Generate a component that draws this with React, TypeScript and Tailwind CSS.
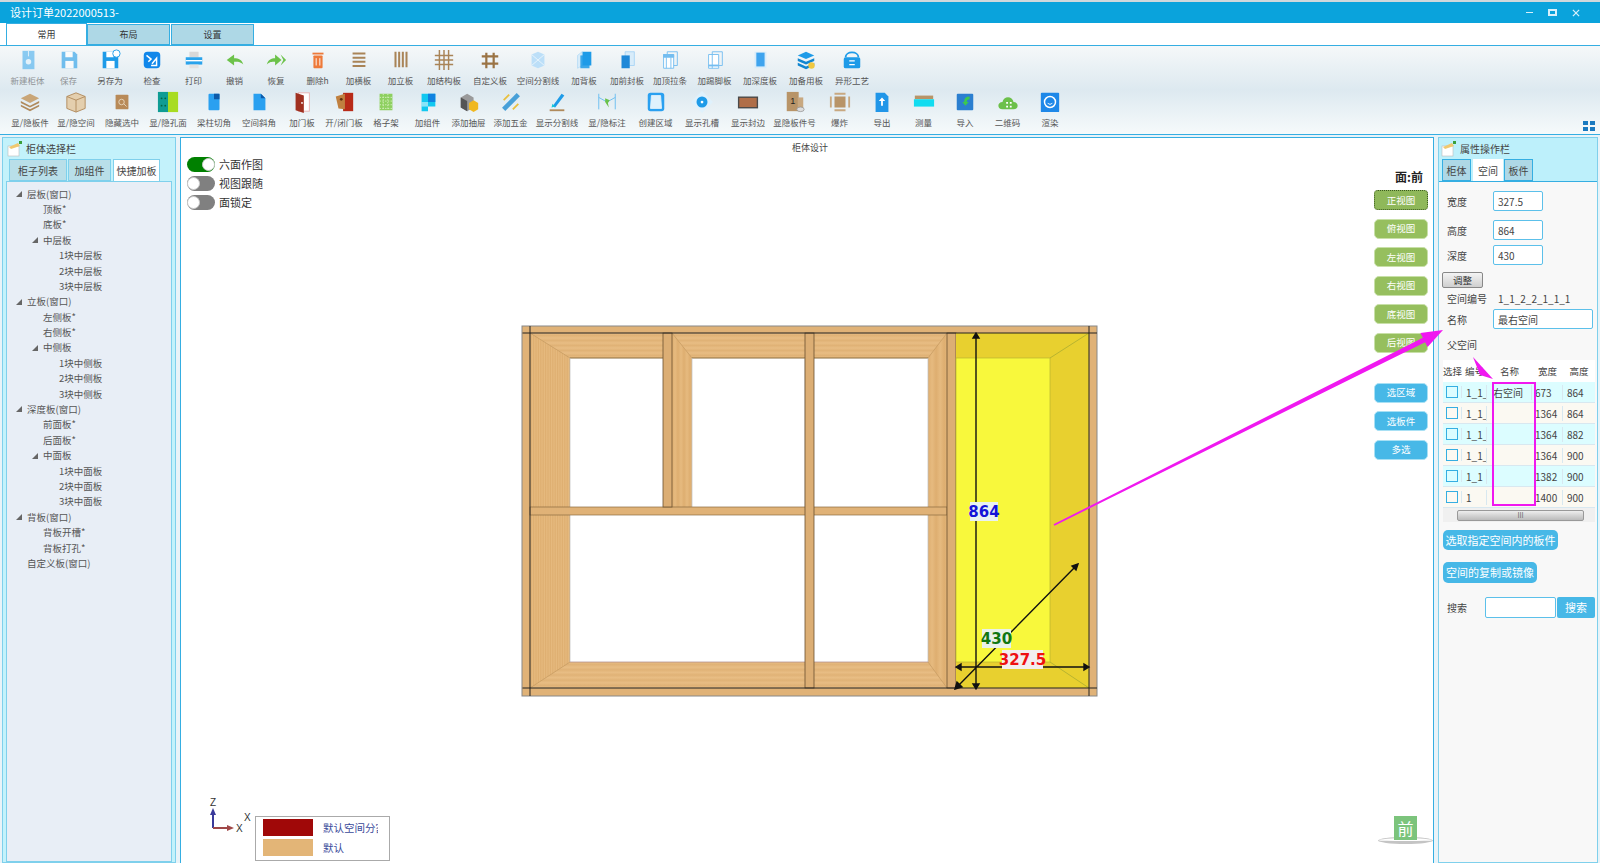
import React from "react";

const cjk = "font-['Noto_Sans_CJK_SC','Noto_Sans',sans-serif]";

type ToolItem = { label: string; w: string; icon: React.ReactNode; faded?: boolean };

const Svg = ({ children }: { children: React.ReactNode }) => (
  <svg width="22" height="22" viewBox="0 0 24 24" className="shrink-0">
    {children}
  </svg>
);

const floppy = (
  <>
    <path d="M4 3h14l3 3v15H4z" fill="#1e9be8" />
    <rect x="8" y="3" width="8" height="6" fill="#fff" />
    <rect x="8" y="13" width="9" height="8" fill="#fff" />
  </>
);

const cube = (front: string, back: string) => (
  <>
    <path d="M10 3h10v15H10z" fill={back} />
    <path d="M5 7l5-4v15l-5 3z" fill="#d8ecfa" stroke="#a8d4f5" strokeWidth="0.7" />
    <path d="M8 7h10v14H8z" fill={front} opacity="0.85" />
  </>
);

const row1: ToolItem[] = [
  { label: "新建柜体", w: "w-[41px]", faded: true, icon: <Svg><rect x="6" y="2" width="13" height="20" fill="#46aeee" /><circle cx="12.5" cy="14" r="3" fill="#dff1fc" /><path d="M12.5 2v6" stroke="#dff1fc" /></Svg> },
  { label: "保存", w: "w-[41px]", faded: true, icon: <Svg>{floppy}</Svg> },
  { label: "另存为", w: "w-[42px]", icon: <Svg>{floppy}<circle cx="19" cy="5" r="4" fill="#fff" stroke="#1e9be8" /></Svg> },
  { label: "检查", w: "w-[42px]", icon: <Svg><rect x="3" y="3" width="18" height="18" rx="4" fill="#1187ea" /><path d="M6 7l5 4-3 3M12 16l5-6v8h-6" stroke="#fff" strokeWidth="1.6" fill="none" /></Svg> },
  { label: "打印", w: "w-[41px]", icon: <Svg><rect x="7" y="3" width="10" height="6" fill="#d8d8d8" /><rect x="3" y="9" width="18" height="8" fill="#2aa3ec" /><rect x="3" y="12" width="18" height="1.5" fill="#fff" /><rect x="7" y="17" width="10" height="4" fill="#e2e2e2" /></Svg> },
  { label: "撤销", w: "w-[41px]", icon: <Svg><path d="M3 12l8-6v4c5 0 9 2 10 7-3-3-6-3-10-3v4z" fill="#6cc24a" /></Svg> },
  { label: "恢复", w: "w-[42px]", icon: <Svg><path d="M2 17c1-5 5-7 9-7V6l7 6-7 6v-4c-4 0-6 0-9 3z" fill="#6cc24a" /><path d="M17 6l6 6-6 6 3-6z" fill="#6cc24a" /></Svg> },
  { label: "删除h", w: "w-[41px]", icon: <Svg><rect x="7" y="7" width="10" height="14" rx="1" fill="#ee7a3a" /><rect x="6" y="4" width="12" height="2" fill="#ee7a3a" /><path d="M10 10v8M14 10v8" stroke="#fff" /></Svg> },
  { label: "加横板", w: "w-[41px]", icon: <Svg><path d="M5 5h14M5 9.500h14M5 14h14M5 18.500h14" stroke="#a98457" strokeWidth="2.2" /></Svg> },
  { label: "加立板", w: "w-[43px]", icon: <Svg><path d="M6 3v17M10 3v17M14 3v17M18 3v17" stroke="#a98457" strokeWidth="2.2" /></Svg> },
  { label: "加结构板", w: "w-[44px]", icon: <Svg><path d="M7 1v22M12 1v22M17 1v22M2 7h20M2 12h20M2 17h20" stroke="#a98457" strokeWidth="1.6" /></Svg> },
  { label: "自定义板", w: "w-[48px]", icon: <Svg><path d="M8 4v17M16 4v17M3 8h18M3 16h18" stroke="#9a7344" strokeWidth="2.4" /></Svg> },
  { label: "空间分割线", w: "w-[48px]", icon: <Svg><path d="M5 6l7-3 7 3v12l-7 3-7-3z" fill="#bcdff8" /><path d="M5 6l14 12M19 6L5 18" stroke="#e8f4fc" /></Svg> },
  { label: "加背板", w: "w-[44px]", icon: <Svg>{cube("#1e9be8", "#1e9be8")}</Svg> },
  { label: "加前封板", w: "w-[42px]", icon: <Svg><path d="M10 3h10v15H10z" fill="#d8ecfa" stroke="#a8d4f5" /><path d="M6 7h9v14H6z" fill="#1e88d8" /></Svg> },
  { label: "加顶拉条", w: "w-[44px]", icon: <Svg><path d="M9 3h11v15H9z" fill="none" stroke="#74bdf0" /><path d="M5 6h11v15H5z" fill="#fff" stroke="#74bdf0" /><path d="M5 6h11v3H5zM8 9v12M13 9v12" stroke="#74bdf0" fill="#74bdf0" /></Svg> },
  { label: "加踢脚板", w: "w-[45px]", icon: <Svg><path d="M9 3h11v15H9z" fill="none" stroke="#74bdf0" /><path d="M5 6h11v15H5z" fill="#fff" stroke="#74bdf0" /><path d="M9 6v15" stroke="#74bdf0" /><rect x="5" y="17" width="11" height="2" fill="#74bdf0" /></Svg> },
  { label: "加深度板", w: "w-[46px]", icon: <Svg><path d="M6 3h13v18H6z" fill="#d8ecfa" /><rect x="8" y="4" width="9" height="15" fill="#3fa4ee" /></Svg> },
  { label: "加备用板", w: "w-[46px]", icon: <Svg><path d="M12 3l9 4-9 4-9-4z" fill="#1e9be8" /><path d="M3 10l9 4 9-4v3l-9 4-9-4zM3 15l9 4 9-4v3l-9 4-9-4z" fill="#1186d0" /><circle cx="18" cy="18" r="3.500" fill="#f0c840" /></Svg> },
  { label: "异形工艺", w: "w-[46px]", icon: <Svg><path d="M5 9c0-7 14-7 14 0" fill="none" stroke="#1e9be8" strokeWidth="2" /><rect x="3" y="9" width="18" height="12" rx="2" fill="#1e9be8" /><path d="M9 13h6M15 17H9" stroke="#fff" strokeWidth="1.400" /></Svg> },
];

const row2: ToolItem[] = [
  { label: "显/隐板件", w: "w-[46px]", icon: <Svg><path d="M12 3l10 5-10 5L2 8z" fill="#c9a678" /><path d="M2 11l10 5 10-5v2l-10 5-10-5zM2 15l10 5 10-5v2l-10 5-10-5z" fill="#b08a5c" /></Svg> },
  { label: "显/隐空间", w: "w-[46px]", icon: <Svg><path d="M12 2l10 4v13l-10 4-10-4V6z" fill="#e4cfae" stroke="#b08a5c" /><path d="M2 6l10 4 10-4M12 10v13" stroke="#b08a5c" fill="none" /></Svg> },
  { label: "隐藏选中", w: "w-[46px]", icon: <Svg><rect x="5" y="4" width="14" height="16" rx="1" fill="#b88a58" /><circle cx="11.500" cy="12" r="3" fill="none" stroke="#e8d6bc" /><path d="M14 14l3 3" stroke="#e8d6bc" /></Svg> },
  { label: "显/隐孔面", w: "w-[46px]", icon: <Svg><rect x="1" y="1" width="11" height="22" fill="#0f9c94" /><rect x="12" y="1" width="11" height="22" fill="#a8dc22" /><circle cx="5" cy="8" r="1" fill="#064" /><circle cx="9" cy="8" r="1" fill="#064" /><circle cx="5" cy="16" r="1" fill="#064" /><circle cx="9" cy="16" r="1" fill="#064" /></Svg> },
  { label: "梁柱切角", w: "w-[46px]", icon: <Svg><rect x="6" y="3" width="12" height="18" rx="1" fill="#2aa0f0" /><rect x="12" y="3" width="6" height="6" fill="#0e5aa8" /></Svg> },
  { label: "空间斜角", w: "w-[44px]", icon: <Svg><path d="M6 3h8l5 5v13H6z" fill="#2aa0f0" /><path d="M14 3l5 5h-5z" fill="#0e5aa8" /></Svg> },
  { label: "加门板", w: "w-[42px]", icon: <Svg><rect x="8" y="2" width="12" height="20" fill="#fff" stroke="#e8b0b0" /><path d="M5 2l9 3v19l-9-3z" fill="#a03020" /><circle cx="12" cy="13" r="1" fill="#fff" /></Svg> },
  { label: "开/闭门板", w: "w-[42px]", icon: <Svg><rect x="11" y="2" width="11" height="20" fill="#b82a18" /><path d="M3 6l10-3v17l-7-1z" fill="#c08040" /><circle cx="9" cy="9" r="1.500" fill="#5a3010" /></Svg> },
  { label: "格子架", w: "w-[42px]", icon: <Svg><rect x="5" y="3" width="14" height="18" fill="#8ed060" /><path d="M5 7h14M5 11h14M5 15h14M5 19h14M9 3v18M14 3v18" stroke="#d6f0c0" strokeDasharray="1.500 1.500" /></Svg> },
  { label: "加组件", w: "w-[41px]", icon: <Svg><path d="M5 3h15v14H12v5H5z" fill="#12c8f0" /><path d="M12 3h8v9h-8z" fill="#1182e0" /><path d="M5 12h7v5H5z" fill="#fff" opacity="0.5" /></Svg> },
  { label: "添加抽屉", w: "w-[41px]", icon: <Svg><path d="M3 7l7-4 7 4v11l-7 4-7-4z" fill="#9a9a9a" /><path d="M3 7l7 4v11l-7-4z" fill="#555" /><path d="M12 13l5-3 5 3v7l-5 3-5-3z" fill="#f0b820" /></Svg> },
  { label: "添加五金", w: "w-[43px]", icon: <Svg><path d="M4 20L20 4" stroke="#48a0d8" strokeWidth="5" /><path d="M4 10l6-6M14 20l6-6" stroke="#e8c040" strokeWidth="2" /></Svg> },
  { label: "显示分割线", w: "w-[50px]", icon: <Svg><path d="M7 17L17 3l3 2-10 13z" fill="#1e9be8" /><path d="M6 18l1-4 3 3z" fill="#16c8d8" /><rect x="4" y="20" width="16" height="2" fill="#b08a5c" /></Svg> },
  { label: "显/隐标注", w: "w-[50px]", icon: <Svg><path d="M3 3v17M21 3v17" stroke="#68bcf0" /><path d="M3 7l9 5 9-5" stroke="#68bcf0" fill="none" /><path d="M10 8l5 2-2 3 1 5-4-6z" fill="#6cc24a" /></Svg> },
  { label: "创建区域", w: "w-[47px]", icon: <Svg><rect x="3" y="2" width="18" height="20" rx="3" fill="#2aa0f0" /><path d="M7 5h10l1 14H6z" fill="#dff1fc" stroke="#dff1fc" /></Svg> },
  { label: "显示孔槽", w: "w-[46px]", icon: <Svg><path d="M0 12L12 0l12 12-12 12z" fill="#dff1fc" /><circle cx="12" cy="12" r="6" fill="#1e9be8" /><circle cx="12" cy="12" r="1.500" fill="#fff" /></Svg> },
  { label: "显示封边", w: "w-[46px]", icon: <Svg><rect x="1" y="6" width="22" height="13" fill="#4a4a4a" /><rect x="2.500" y="7.500" width="19" height="10" fill="#b06e48" /></Svg> },
  { label: "显隐板件号", w: "w-[47px]", icon: <Svg><rect x="3" y="1" width="13" height="21" fill="#b89468" /><rect x="15" y="7" width="6" height="13" fill="#c8a880" /><text x="9.500" y="14" fontSize="10" textAnchor="middle" fill="#222" fontFamily="Liberation Sans">1</text><ellipse cx="18" cy="20" rx="4" ry="2.500" fill="#ddd" stroke="#888" strokeWidth="0.7" /></Svg> },
  { label: "爆炸", w: "w-[43px]", icon: <Svg><rect x="6" y="6" width="12" height="12" fill="#b89468" /><path d="M6 2h12v2H6zM6 20h12v2H6zM1 6h2v12H1zM21 6h2v12h-2z" fill="#c8a880" /></Svg> },
  { label: "导出", w: "w-[42px]", icon: <Svg><path d="M5 2h10l4 4v17H5z" fill="#2196e8" /><path d="M12 7l3.500 4H13v5h-2v-5H8.500z" fill="#fff" /></Svg> },
  { label: "测量", w: "w-[41px]", icon: <Svg><rect x="2" y="5" width="20" height="4" fill="#b89468" /><rect x="1" y="9" width="22" height="8" fill="#12dcf0" /></Svg> },
  { label: "导入", w: "w-[42px]", icon: <Svg><rect x="3" y="3" width="18" height="18" rx="1" fill="#2b7fd0" /><path d="M17 6c-4 0-6 2-6 6h-2l3.500 4 3.500-4h-2c0-2 1-3 3-3z" fill="#3cc850" /></Svg> },
  { label: "二维码", w: "w-[43px]", icon: <Svg><path d="M6 20c-6 0-6-8 0-8 1-7 11-7 12 0 6 0 6 8 0 8z" fill="#6cc04a" /><path d="M10 12h2v2h-2zM14 12h2v2h-2zM10 16h2v2h-2zM14 16h2v2h-2z" fill="#fff" /></Svg> },
  { label: "渲染", w: "w-[42px]", icon: <Svg><rect x="2" y="2" width="20" height="21" rx="1" fill="#1e88e8" /><circle cx="12" cy="12" r="6" fill="none" stroke="#fff" strokeWidth="1.600" /><path d="M9.500 13c1 2 4 2 5 0" stroke="#fff" fill="none" /></Svg> },
];

const tree: [number, boolean, string][] = [
  [0, true, "层板(窗口)"],
  [1, false, "顶板*"],
  [1, false, "底板*"],
  [1, true, "中层板"],
  [2, false, "1块中层板"],
  [2, false, "2块中层板"],
  [2, false, "3块中层板"],
  [0, true, "立板(窗口)"],
  [1, false, "左侧板*"],
  [1, false, "右侧板*"],
  [1, true, "中侧板"],
  [2, false, "1块中侧板"],
  [2, false, "2块中侧板"],
  [2, false, "3块中侧板"],
  [0, true, "深度板(窗口)"],
  [1, false, "前面板*"],
  [1, false, "后面板*"],
  [1, true, "中面板"],
  [2, false, "1块中面板"],
  [2, false, "2块中面板"],
  [2, false, "3块中面板"],
  [0, true, "背板(窗口)"],
  [1, false, "背板开槽*"],
  [1, false, "背板打孔*"],
  [0, false, "自定义板(窗口)"],
];

const spaceRows = [
  ["1_1_", "右空间", "673", "864"],
  ["1_1_", "", "1364", "864"],
  ["1_1_", "", "1364", "882"],
  ["1_1_", "", "1364", "900"],
  ["1_1", "", "1382", "900"],
  ["1", "", "1400", "900"],
];

const viewBtns = ["俯视图", "左视图", "右视图", "底视图", "后视图"];

function PanelIcon() {
  return (
    <svg width="16" height="16" viewBox="0 0 16 16" className="shrink-0">
      <rect x="1" y="5" width="11" height="10" fill="#fff" stroke="#bbb" strokeWidth="0.6" />
      <path d="M2 6l9-4 2 3-9 3z" fill="#f0c870" />
      <rect x="12" y="0" width="3" height="3" fill="#3aa03a" />
    </svg>
  );
}

function ToolRow({ items }: { items: ToolItem[] }) {
  return (
    <div className="flex h-[42px] items-start pl-[7px]">
      {items.map((t) => (
        <div key={t.label} className={`${t.w} flex shrink-0 flex-col items-center gap-[2px] ${t.faded ? "opacity-60" : ""}`}>
          {t.icon}
          <span className="text-[8.500px] leading-[14px] whitespace-nowrap text-[#555]">{t.label}</span>
        </div>
      ))}
    </div>
  );
}

function Toggle({ on, label }: { on: boolean; label: string }) {
  return (
    <div className="flex h-[19px] items-center gap-1">
      <div className={`flex h-[15px] w-[28px] items-center rounded-full ${on ? "justify-end bg-[#008000]" : "justify-start bg-[#808080]"}`}>
        <div className="h-[13px] w-[13px] rounded-full border border-[#ccc] bg-white" />
      </div>
      <span className="text-[11px] text-[#333]">{label}</span>
    </div>
  );
}

function Field({ label, value, cls }: { label: string; value: string; cls: string }) {
  return (
    <div className={`flex items-center ${cls}`}>
      <span className="w-[52px] pl-[6px] text-[10px] text-[#444]">{label}</span>
      <div className="flex h-[20px] w-[50px] items-center rounded-[2px] border border-[#5cc0ea] bg-white pl-1 text-[10px] text-[#444]">
        {value}
      </div>
    </div>
  );
}

function Cabinet() {
  return (
    <svg width="1000" height="400" viewBox="500 320 1000 400" className="block">
      <defs>
        <linearGradient id="woodV" x1="0" y1="0" x2="1" y2="0" spreadMethod="repeat" gradientTransform="scale(0.06 1)">
          <stop offset="0" stopColor="#e6ba7f" />
          <stop offset="0.5" stopColor="#deae70" />
          <stop offset="1" stopColor="#e6ba7f" />
        </linearGradient>
        <linearGradient id="woodH" x1="0" y1="0" x2="0" y2="1" spreadMethod="repeat" gradientTransform="scale(1 0.2)">
          <stop offset="0" stopColor="#e8bd84" />
          <stop offset="0.5" stopColor="#e0b276" />
          <stop offset="1" stopColor="#e8bd84" />
        </linearGradient>
      </defs>
      <rect x="522" y="326" width="575" height="370" fill="#e0b277" stroke="#888" />
      {/* left bay trapezoids */}
      <path d="M530 333h133v25h-93z" fill="url(#woodH)" />
      <path d="M530 333l40 25v149h-40z" fill="url(#woodV)" />
      <path d="M672 333h133v25H692z" fill="url(#woodH)" />
      <path d="M672 333l20 25v149h-20z" fill="url(#woodV)" />
      <path d="M814 333h133l-19 25H814z" fill="url(#woodH)" />
      <path d="M947 333v355l-19-26V358z" fill="url(#woodV)" />
      <path d="M530 515l40 0v147l-40 26z" fill="url(#woodV)" />
      <path d="M530 688l40-26h235v26zM814 662h114l19 26H814z" fill="url(#woodH)" />
      <path d="M530 333l40 25M672 333l20 25M947 333l-19 25M947 688l-19-26M530 688l40-26" stroke="#c49a60" strokeWidth="0.7" />
      <rect x="570" y="358" width="93" height="149" fill="#fff" />
      <rect x="692" y="358" width="113" height="149" fill="#fff" />
      <rect x="814" y="358" width="114" height="149" fill="#fff" />
      <rect x="570" y="515" width="235" height="147" fill="#fff" />
      <rect x="814" y="515" width="114" height="147" fill="#fff" />
      <path d="M570 358h93M692 358h113M814 358h114" stroke="#8a6a3a" />
      <path d="M570 358v149M692 358v149M570 515v147M928 358v304M805 358v149" stroke="#bbb" strokeWidth="0.7" />
      <path d="M570 662h235M814 662h114" stroke="#a88" strokeWidth="0.7" />
      {/* uprights and shelf */}
      <rect x="530" y="507" width="417" height="8" fill="#e0b277" stroke="#8a6a40" strokeWidth="0.7" />
      <rect x="663" y="333" width="9" height="174" fill="#dcae74" stroke="#6a5030" strokeWidth="0.8" />
      <rect x="805" y="333" width="9" height="355" fill="#dcae74" stroke="#6a5030" strokeWidth="0.8" />
      <rect x="947" y="333" width="9" height="355" fill="#dcae74" stroke="#6a5030" strokeWidth="0.8" />
      {/* yellow selected space */}
      <rect x="956" y="333" width="133" height="355" fill="#e8d02f" />
      <rect x="956" y="358" width="94" height="304" fill="#f8f83c" stroke="#b8b430" strokeWidth="0.7" />
      <path d="M1050 358l39-25M1050 662l39 26" stroke="#b8b430" />
      <path d="M522.500 333H1097M530 326v370M1089 326v370M522.500 688H1097" stroke="#222" strokeWidth="1" />
      {/* dimension arrows */}
      <g stroke="#111" strokeWidth="1.400" fill="#111">
        <path d="M976 336v350M958 667h129M958 686L1076 566" fill="none" />
        <path d="M976 333l-3 5h6zM976 689l-3-5h6zM956 667l5-3v6zM1089 667l-5-3v6zM1078 564l-6 2 4 4z" />
        <path d="M955 689l7-2-5-5z" />
      </g>
      <rect x="970" y="502" width="28" height="19" fill="#e9f2f2" />
      <text x="984" y="517" textAnchor="middle" fontSize="15" fontWeight="700" fill="#1414d8" fontFamily="DejaVu Sans">864</text>
      <rect x="982" y="629" width="29" height="19" fill="#e9f2e9" />
      <text x="996.500" y="644" textAnchor="middle" fontSize="15" fontWeight="700" fill="#117711" fontFamily="DejaVu Sans">430</text>
      <rect x="1002" y="650" width="41" height="19" fill="#f2eeee" />
      <text x="1022.500" y="665" textAnchor="middle" fontSize="15" fontWeight="700" fill="#ee1111" fontFamily="DejaVu Sans">327.5</text>
    </svg>
  );
}

export default function App() {
  return (
    <div className={`flex h-[863px] w-[1600px] flex-col overflow-hidden bg-[#e9f3f8] ${cjk}`}>
      {/* title bar */}
      <div className="flex h-[23px] shrink-0 items-center justify-between border-t-2 border-[#cfd8dc] bg-[#0aa3dc] pl-[10px] pr-[20px] text-white">
        <span className="text-[11px]">设计订单2022000513-</span>
        <div className="flex items-center gap-[15px]">
          <div className="h-px w-[7px] bg-[#d8f0fa]" />
          <div className="h-[7px] w-[9px] border-2 border-[#d8f0fa]" />
          <svg width="8" height="8" viewBox="0 0 9 9"><path d="M1 1l7 7M8 1l-7 7" stroke="#d8f0fa" strokeWidth="1.400" /></svg>
        </div>
      </div>

      {/* menu tabs */}
      <div className="flex h-[22px] shrink-0 items-end bg-white pl-[6px]">
        <div className="flex h-[22px] w-[81px] items-center justify-center border-x border-t border-[#35aee2] bg-white text-[9px] text-[#333]">常用</div>
        <div className="flex h-[21px] w-[83px] items-center justify-center border border-[#35aee2] bg-[#aed8e6] text-[9px] text-[#333]">布局</div>
        <div className="ml-px flex h-[21px] w-[83px] items-center justify-center border border-[#35aee2] bg-[#aed8e6] text-[9px] text-[#333]">设置</div>
      </div>

      {/* toolbar */}
      <div className="relative h-[90px] shrink-0 border-y border-[#35aee2] bg-gradient-to-b from-[#f5f8f9] via-[#dde9f0] to-[#f6fafb] pt-[3px]">
        <ToolRow items={row1} />
        <ToolRow items={row2} />
        <svg width="12" height="10" viewBox="0 0 12 10" className="absolute bottom-[3px] right-[5px]">
          <path d="M0 0h5v4H0zM7 0h5v4H7zM0 6h5v4H0zM7 6h5v4H7z" fill="#1a7ac0" />
        </svg>
      </div>

      {/* main */}
      <div className="flex min-h-0 flex-1 gap-[4px] pl-[2px] pt-[2px]">
        {/* left panel */}
        <div className="flex w-[174px] shrink-0 flex-col border border-[#7fd0ec] bg-[#c3f2fb] px-[4px]">
          <div className="flex h-[21px] shrink-0 items-center gap-[3px] text-[10px] text-[#444]">
            <PanelIcon />
            柜体选择栏
          </div>
          <div className="flex h-[22px] shrink-0 items-end pl-[2px] text-[10px] text-[#444]">
            <div className="flex h-[22px] w-[58px] items-center justify-center border border-[#7fd0ec] bg-[#b9dfe9]">柜子列表</div>
            <div className="ml-px flex h-[22px] w-[43px] items-center justify-center border border-[#7fd0ec] bg-[#b9dfe9]">加组件</div>
            <div className="ml-[2px] flex h-[22px] w-[47px] items-center justify-center border-x border-t border-[#7fd0ec] bg-white">快捷加板</div>
          </div>
          <div className="-mx-px min-h-0 flex-1 border border-[#7fd0ec] bg-[#e8eef6] pt-[4px] text-[9.500px] text-[#555]">
            {tree.map(([lvl, arrow, name], i) => (
              <div
                key={i}
                className={`relative flex h-[15.4px] items-center whitespace-nowrap ${lvl === 0 ? "pl-[20px]" : lvl === 1 ? "pl-[36px]" : "pl-[52px]"}`}
              >
                {arrow && (
                  <span
                    className={`absolute top-[5px] h-0 w-0 border-b-[6px] border-l-[6px] border-b-[#666] border-l-transparent ${lvl === 0 ? "left-[9px]" : "left-[25px]"}`}
                  />
                )}
                {name}
              </div>
            ))}
          </div>
        </div>

        {/* center panel */}
        <div className="relative w-[1254px] shrink-0 border-x border-t border-[#35aee2] bg-white">
          <div className="flex h-[20px] items-center justify-center pl-[6px] text-[9px] text-[#444]">柜体设计</div>
          <div className="absolute left-[6px] top-[17px]">
            <Toggle on label="六面作图" />
            <Toggle on={false} label="视图跟随" />
            <Toggle on={false} label="面锁定" />
          </div>
          {/* view buttons */}
          <div className="absolute right-[5px] top-[32px] flex w-[60px] flex-col items-end text-[9.500px] text-white">
            <div className="mb-[6px] mr-[5px] text-[12px] font-bold leading-[14px] text-[#222]">面:前</div>
            <div className="flex h-[20px] w-[54px] items-center justify-center rounded-[4px] border border-dotted border-[#3c5a20] bg-[#8fb85a]">正视图</div>
            <div className="mt-[8.500px] flex flex-col gap-[8.500px]">
              {viewBtns.map((b) => (
                <div key={b} className="flex h-[20px] w-[54px] items-center justify-center rounded-[5px] border border-[#c8e0a8] bg-[#96bf5e]">{b}</div>
              ))}
            </div>
            <div className="mt-[30px] flex flex-col gap-[8.500px]">
              {["选区域", "选板件", "多选"].map((b) => (
                <div key={b} className="flex h-[20px] w-[54px] items-center justify-center rounded-[5px] border border-[#a8e0f4] bg-[#47b8e7]">{b}</div>
              ))}
            </div>
          </div>
          {/* drawing */}
          <div className="absolute left-[319px] top-[182px]">
            <Cabinet />
          </div>
          {/* axes */}
          <svg width="60" height="50" viewBox="0 0 60 50" className="absolute left-[24px] top-[658px]">
            <path d="M8 32V16" stroke="#3a3a9a" strokeWidth="2" />
            <path d="M8 12l-3 7h6z" fill="#3a3a9a" />
            <path d="M8 32h16" stroke="#a04848" strokeWidth="2" />
            <path d="M29 32l-7-3v6z" fill="#a04848" />
            <text x="5" y="10" fontSize="10" fill="#333" fontFamily="Liberation Sans">Z</text>
            <text x="31" y="36" fontSize="10" fill="#333" fontFamily="Liberation Sans">X</text>
            <text x="39" y="25" fontSize="10" fill="#333" fontFamily="Liberation Sans">X</text>
          </svg>
          {/* legend */}
          <div className="absolute left-[74px] top-[678px] flex h-[45px] w-[135px] flex-col gap-[3px] border border-[#aaa] bg-white pl-[7px] pt-[2px] text-[10.500px] text-[#3a4a9a]">
            <div className="flex items-center gap-[10px]">
              <div className="h-[17px] w-[50px] shrink-0 bg-[#a00808]" />
              <span className="w-[55px] overflow-hidden whitespace-nowrap">默认空间分割</span>
            </div>
            <div className="flex items-center gap-[10px]">
              <div className="h-[17px] w-[50px] shrink-0 bg-[#e3b577]" />
              默认
            </div>
          </div>
          {/* view cube */}
          <div className="absolute bottom-[19px] right-0 h-[7px] w-[55px] rounded-[50%] border border-b-[3px] border-[#c4c4c4]" />
          <div className="absolute bottom-[23px] right-[16px] flex h-[24px] w-[23px] items-center justify-center bg-[#7cc47c] text-[16px] leading-none text-white">前</div>
        </div>

        {/* right panel */}
        <div className="flex w-[160px] shrink-0 flex-col border border-[#7fd0ec] bg-[#bdf0fb]">
          <div className="flex h-[21px] shrink-0 items-center gap-[3px] pl-[2px] text-[10px] text-[#444]">
            <PanelIcon />
            属性操作栏
          </div>
          <div className="flex h-[22px] shrink-0 items-end pl-[3px] text-[10px] text-[#444]">
            <div className="flex h-[22px] w-[29px] items-center justify-center border border-[#35aee2] bg-[#aed8e6]">柜体</div>
            <div className="ml-[2px] flex h-[22px] w-[30px] items-center justify-center bg-white">空间</div>
            <div className="ml-px flex h-[22px] w-[29px] items-center justify-center border border-[#35aee2] bg-[#aed8e6]">板件</div>
          </div>
          <div className="relative min-h-0 flex-1 border-t border-[#35aee2] bg-[#f8f8f8] pl-[2px] pt-[9px]">
            <Field label="宽度" value="327.5" cls="" />
            <Field label="高度" value="864" cls="mt-[9px]" />
            <Field label="深度" value="430" cls="mt-[5px]" />
            <div className="ml-[1px] mt-[7px] flex h-[16px] w-[41px] items-center justify-center rounded-[2px] border border-[#888] bg-gradient-to-b from-[#f4f4f4] to-[#cfcfcf] text-[9.500px] text-[#333]">调整</div>
            <div className="mt-[1px] flex h-[18px] items-center text-[10px] text-[#444]">
              <span className="w-[57px] pl-[6px]">空间编号</span>
              <span className="whitespace-nowrap">1_1_2_2_1_1_1</span>
            </div>
            <div className="mt-[2px] flex items-center text-[10px] text-[#444]">
              <span className="w-[52px] pl-[6px]">名称</span>
              <div className="flex h-[20px] w-[100px] items-center rounded-[2px] border border-[#5cc0ea] bg-white pl-1">最右空间</div>
            </div>
            <div className="flex h-[31px] items-center pl-[6px] text-[10px] text-[#444]">父空间</div>

            {/* space table */}
            <div className="ml-[2px] w-[152px] text-[10px] text-[#444]">
              <div className="grid h-[22px] grid-cols-[19px_25px_45px_31px_32px] items-center bg-white text-center text-[9.500px]">
                <span>选择</span>
                <span>编号</span>
                <span>名称</span>
                <span>宽度</span>
                <span>高度</span>
              </div>
              {spaceRows.map((r, i) => (
                <div
                  key={i}
                  className={`grid h-[21px] grid-cols-[19px_25px_45px_31px_32px] items-center divide-x divide-[#d8e8f0] border-b border-[#d8e8f0] ${i % 2 === 0 ? "bg-[#dcfdff]" : "bg-[#fbf9f2]"}`}
                >
                  <div className="flex justify-center">
                    <div className="h-[12px] w-[12px] border border-[#35aee2]" />
                  </div>
                  <span className="overflow-hidden pl-[4px] whitespace-nowrap">{r[0]}</span>
                  <span className="pl-[6px] whitespace-nowrap">{r[1]}</span>
                  <span className="pl-[3px]">{r[2]}</span>
                  <span className="pl-[4px]">{r[3]}</span>
                </div>
              ))}
              <div className="flex h-[14px] items-center bg-[#f0f0f0] pl-[14px] text-[7px]">
                <div className="flex h-[11px] w-[127px] items-center justify-center rounded-[2px] border border-[#999] bg-gradient-to-b from-[#eee] to-[#bbb] text-[#666]">III</div>
              </div>
            </div>

            <div className="ml-[2px] mt-[8px] flex h-[20px] w-[115px] items-center justify-center rounded-[5px] bg-[#47b8e7] text-[11px] whitespace-nowrap text-white">选取指定空间内的板件</div>
            <div className="ml-[2px] mt-[12px] flex h-[21px] w-[94px] items-center justify-center rounded-[5px] bg-[#47b8e7] text-[11px] whitespace-nowrap text-white">空间的复制或镜像</div>
            <div className="mt-[14px] flex items-center text-[10px] text-[#444]">
              <span className="w-[44px] pl-[6px]">搜索</span>
              <div className="h-[21px] w-[71px] rounded-[2px] border border-[#5cc0ea] bg-white" />
              <div className="ml-px flex h-[21px] w-[38px] items-center justify-center rounded-[2px] bg-[#47b8e7] text-[11px] text-white">搜索</div>
            </div>
          </div>
        </div>
      </div>

      {/* magenta annotations over the page */}
      <svg width="1600" height="863" viewBox="0 0 1600 863" className="pointer-events-none absolute left-0 top-0">
        <path d="M1053.600 524.300L1422.900 337.800L1420.400 332.900L1443 330L1427.600 347.100L1425.100 342.200L1054.400 525.700z" fill="#f018f0" />
        <path d="M1473 357l20 22-13-4z" fill="#f018f0" />
        <rect x="1493" y="383" width="42" height="122" fill="none" stroke="#f018f0" strokeWidth="2" />
      </svg>
    </div>
  );
}
